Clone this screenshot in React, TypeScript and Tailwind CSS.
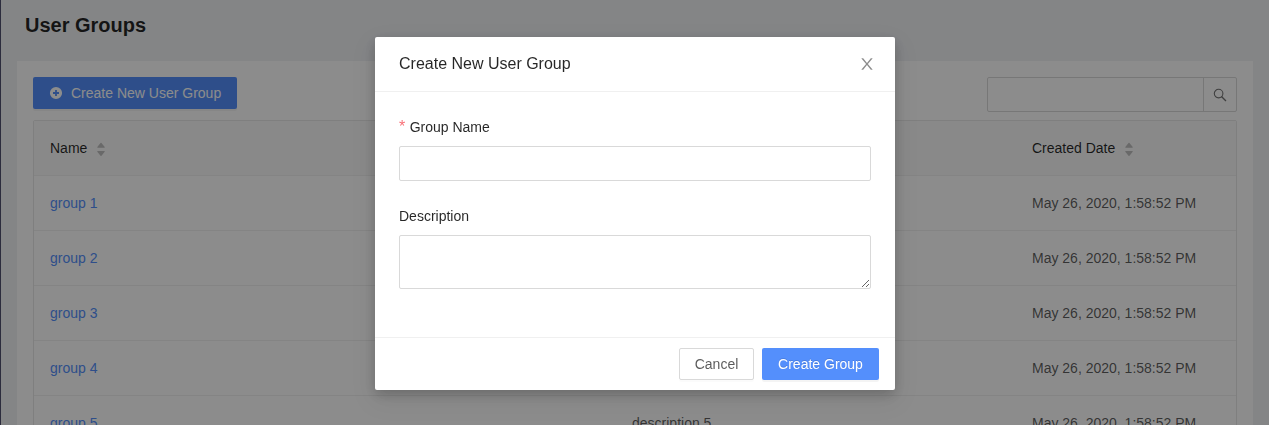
import React from "react";

const rows = [1, 2, 3, 4, 5].map((n) => ({
  name: `group ${n}`,
  description: `description ${n}`,
  created: "May 26, 2020, 1:58:52 PM",
}));

function Sorter() {
  return (
    <svg width="8" height="14" viewBox="0 0 8 14" className="mt-[2px] ml-[9.3px] fill-[#bfbfbf]" aria-hidden="true">
      <path d="M4 0.8 Q4.3 0.8 4.5 1.1 L7.7 5 Q7.9 5.7 7.4 5.7 H0.6 Q0.1 5.7 0.3 5 L3.5 1.1 Q3.7 0.8 4 0.8 Z" />
      <path d="M4 14 Q3.7 14 3.5 13.7 L0.3 9.8 Q0.1 9.1 0.6 9.1 H7.4 Q7.9 9.1 7.7 9.8 L4.5 13.7 Q4.3 14 4 14 Z" />
    </svg>
  );
}

function CloseIcon() {
  return (
    <svg width="18" height="18" viewBox="0 0 1024 1024" fill="currentColor" aria-hidden="true">
      <path d="M563.8 512l262.5-312.9c4.4-5.2.7-13.1-6.1-13.1h-79.8c-4.7 0-9.2 2.1-12.3 5.7L511.6 449.8 295.1 191.7c-3-3.6-7.5-5.7-12.3-5.7H203c-6.8 0-10.5 7.9-6.1 13.1L459.4 512 196.9 824.9A7.95 7.95 0 0 0 203 838h79.8c4.7 0 9.2-2.1 12.3-5.7l216.5-258.1 216.5 258.1c3 3.6 7.5 5.7 12.3 5.7h79.8c6.8 0 10.5-7.9 6.1-13.1L563.8 512z" />
    </svg>
  );
}

function PlusCircleIcon() {
  return (
    <svg width="14" height="14" viewBox="0 0 14 14" className="mr-2" aria-hidden="true">
      <path fillRule="evenodd" fill="currentColor" d="M7 0.9a6.1 6.1 0 1 0 0 12.2a6.1 6.1 0 0 0 0-12.2zM6.1 4h1.8v2.1H10v1.8H7.9V10H6.1V7.9H4V6.1h2.1z" />
    </svg>
  );
}

function SearchIcon() {
  return (
    <svg width="14" height="14" viewBox="0 0 14 14" fill="none" stroke="currentColor" strokeWidth="1.1" aria-hidden="true">
      <circle cx="5.6" cy="5.6" r="4.3" />
      <path d="M8.7 8.7 L13 13" strokeWidth="1.3" />
    </svg>
  );
}

const grid = "grid grid-cols-[582px_400px_1fr]";

function GroupsPage() {
  return (
    <main className="h-full overflow-hidden border-l border-[#505070] bg-[#f0f2f5] px-4">
      <h1 className="h-[61px] pt-[9px] pl-2 text-xl leading-8 font-bold text-black/85">User Groups</h1>
      <section className="h-[600px] bg-white p-4">
        <div className="flex h-[43px] items-start justify-between">
          <button className="flex h-8 items-center rounded-[2px] bg-[#548ffc] px-4 text-white shadow-[0_2px_0_rgba(0,0,0,0.045)]">
            <PlusCircleIcon />
            Create New User Group
          </button>
          <div className="flex h-[35px] w-[250px] rounded-[2px] border border-[#d9d9d9]">
            <input aria-label="Search" className="min-w-0 flex-1 bg-transparent px-3 outline-none" />
            <button aria-label="Search" className="flex w-[33px] items-center justify-center border-l border-[#d9d9d9] text-black/55">
              <SearchIcon />
            </button>
          </div>
        </div>
        <div className="rounded-t-[2px] border border-[#e8e8e8]">
          <div className={`${grid} h-[55px] items-center border-b border-[#f0f0f0] bg-[#fafafa] text-black/85`}>
            <div className="flex items-center pl-4">Name<Sorter /></div>
            <div className="pl-4">Description</div>
            <div className="flex items-center pl-4">Created Date<Sorter /></div>
          </div>
          {rows.map((row) => (
            <div key={row.name} className={`${grid} h-[55px] items-center border-b border-[#f0f0f0]`}>
              <a className="pl-4 text-[#548ffc]">{row.name}</a>
              <span className="pl-4">{row.description}</span>
              <span className="pl-4">{row.created}</span>
            </div>
          ))}
        </div>
      </section>
    </main>
  );
}

function CreateGroupDialog() {
  return (
    <div
      role="dialog"
      aria-label="Create New User Group"
      className="flex h-[353px] w-[520px] flex-col rounded-[2px] bg-white shadow-[0_4px_12px_rgba(0,0,0,0.15),0_6px_16px_rgba(0,0,0,0.08),0_9px_28px_8px_rgba(0,0,0,0.05)]"
    >
      <header className="flex h-[55px] shrink-0 items-center justify-between border-b border-[#f0f0f0] pr-[19px] pl-6">
        <h2 className="pb-px text-base leading-[22px] text-black/85">Create New User Group</h2>
        <button aria-label="Close" className="text-black/45"><CloseIcon /></button>
      </header>
      <div className="flex-1 px-6 pt-6 text-black/85">
        <label className="flex h-[30px] leading-[22px]">
          <span className="mr-[4.4px] text-base leading-[22px] text-[#f5222d]/65">*</span>Group Name
        </label>
        <input aria-label="Group Name" className="block h-[35px] w-full rounded-[2px] border border-[#d9d9d9] px-3 outline-none" />
        <label className="mt-6 block h-[30px] leading-[22px]">Description</label>
        <textarea aria-label="Description" className="block h-[54px] w-full resize-y rounded-[2px] border border-[#d9d9d9] px-3 py-1 outline-none" />
      </div>
      <footer className="flex h-[53px] shrink-0 items-center justify-end gap-2 border-t border-[#f0f0f0] px-4">
        <button className="h-8 w-[75px] rounded-[2px] border border-[#d9d9d9] shadow-[0_2px_0_rgba(0,0,0,0.015)]">Cancel</button>
        <button className="h-8 w-[117px] rounded-[2px] bg-[#548ffc] text-white shadow-[0_2px_0_rgba(0,0,0,0.045)] [text-shadow:0_-1px_0_rgba(0,0,0,0.12)]">Create Group</button>
      </footer>
    </div>
  );
}

export default function App() {
  return (
    <div className="h-[425px] w-full overflow-hidden font-['Liberation_Sans',Arial,sans-serif] text-sm leading-[22px] text-black/65">
      <GroupsPage />
      <div className="fixed inset-0 flex items-start justify-center bg-black/45 pt-[37px] pl-px">
        <CreateGroupDialog />
      </div>
    </div>
  );
}
